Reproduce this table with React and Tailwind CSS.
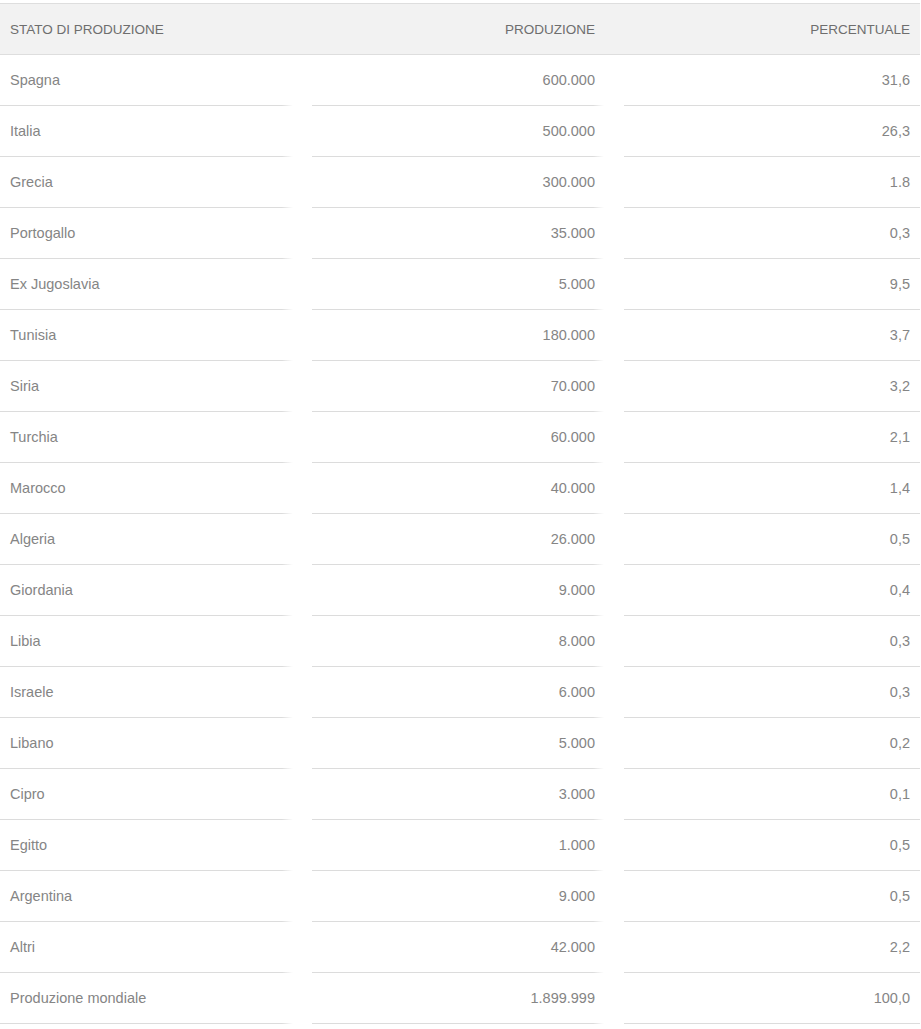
import React from "react";

const rows = [
  ["Spagna", "600.000", "31,6"],
  ["Italia", "500.000", "26,3"],
  ["Grecia", "300.000", "1.8"],
  ["Portogallo", "35.000", "0,3"],
  ["Ex Jugoslavia", "5.000", "9,5"],
  ["Tunisia", "180.000", "3,7"],
  ["Siria", "70.000", "3,2"],
  ["Turchia", "60.000", "2,1"],
  ["Marocco", "40.000", "1,4"],
  ["Algeria", "26.000", "0,5"],
  ["Giordania", "9.000", "0,4"],
  ["Libia", "8.000", "0,3"],
  ["Israele", "6.000", "0,3"],
  ["Libano", "5.000", "0,2"],
  ["Cipro", "3.000", "0,1"],
  ["Egitto", "1.000", "0,5"],
  ["Argentina", "9.000", "0,5"],
  ["Altri", "42.000", "2,2"],
  ["Produzione mondiale", "1.899.999", "100,0"],
];

function Cell({ children, className, line }) {
  return (
    <div className={"flex flex-col " + className}>
      <div className="h-[50px] pt-[2px] flex items-center">{children}</div>
      <div className={"h-px " + line}></div>
    </div>
  );
}

export default function App() {
  return (
    <div
      className="w-[921px] bg-white pt-[3px] text-[14.5px] text-[#858585]"
      style={{ fontFamily: '"Liberation Sans", Arial, sans-serif' }}
    >
      <div className="w-[920px] h-[52px] pt-[2px] border-t border-b border-[#dedede] bg-[#f2f2f2] flex items-center text-[13.5px] text-[#6e6e6e]">
        <div className="w-[293px] pl-[10px]">STATO DI PRODUZIONE</div>
        <div className="w-[311px] text-right pr-[9px]">PRODUZIONE</div>
        <div className="w-[316px] text-right pr-[10px]">PERCENTUALE</div>
      </div>
      {rows.map((r, i) => (
        <div key={i} className="flex w-[920px]">
          <Cell
            className="w-[293px]"
            line="bg-[linear-gradient(to_right,#dcdcdc_calc(100%-11px),rgba(220,220,220,0))]"
          >
            <span className="pl-[10px]">{r[0]}</span>
          </Cell>
          <Cell
            className="w-[292px] ml-[19px]"
            line="bg-[linear-gradient(to_right,#dcdcdc_calc(100%-11px),rgba(220,220,220,0))]"
          >
            <span className="w-full text-right pr-[9px]">{r[1]}</span>
          </Cell>
          <Cell className="w-[296px] ml-[20px]" line="bg-[#dcdcdc]">
            <span className="w-full text-right pr-[10px]">{r[2]}</span>
          </Cell>
        </div>
      ))}
    </div>
  );
}
